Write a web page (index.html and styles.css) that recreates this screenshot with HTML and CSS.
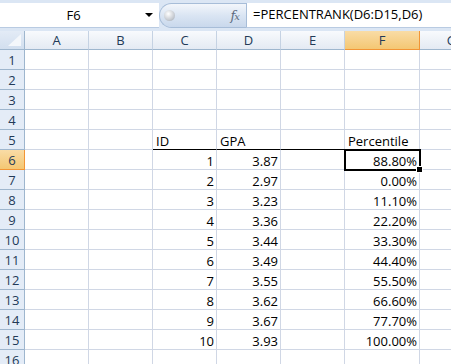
FILE: index.html
```html
<!DOCTYPE html>
<html>
<head>
<meta charset="utf-8">
<title>PERCENTRANK</title>
<link rel="stylesheet" href="styles.css">
</head>
<body>
<div class="formula-bar">
    <div class="name-box"><span class="name">F6</span><span class="arrow"></span></div>
    <div class="fx-button"><span class="knob"></span><span class="fx">f<i>x</i></span></div>
    <div class="formula">=PERCENTRANK(D6:D15,D6)</div>
</div>
<div class="sheet">
    <div class="corner"><svg width="13" height="12" viewBox="0 0 13 12"><polygon points="13,0 13,12 0,12" fill="#f4f7fb"/></svg></div>
    <div class="col-head">A</div><div class="col-head">B</div><div class="col-head">C</div><div class="col-head">D</div><div class="col-head">E</div><div class="col-head sel">F</div><div class="col-head">G</div>

    <div class="row-head">1</div><div class="cell"></div><div class="cell"></div><div class="cell"></div><div class="cell"></div><div class="cell"></div><div class="cell"></div><div class="cell"></div>
    <div class="row-head">2</div><div class="cell"></div><div class="cell"></div><div class="cell"></div><div class="cell"></div><div class="cell"></div><div class="cell"></div><div class="cell"></div>
    <div class="row-head">3</div><div class="cell"></div><div class="cell"></div><div class="cell"></div><div class="cell"></div><div class="cell"></div><div class="cell"></div><div class="cell"></div>
    <div class="row-head">4</div><div class="cell"></div><div class="cell"></div><div class="cell"></div><div class="cell"></div><div class="cell"></div><div class="cell"></div><div class="cell"></div>
    <div class="row-head">5</div><div class="cell"></div><div class="cell"></div><div class="cell ul">ID</div><div class="cell ul">GPA</div><div class="cell ul"></div><div class="cell ul">Percentile</div><div class="cell"></div>
    <div class="row-head sel">6</div><div class="cell"></div><div class="cell"></div><div class="cell num">1</div><div class="cell num">3.87</div><div class="cell"></div><div class="cell num active">88.80%</div><div class="cell"></div>
    <div class="row-head">7</div><div class="cell"></div><div class="cell"></div><div class="cell num">2</div><div class="cell num">2.97</div><div class="cell"></div><div class="cell num">0.00%</div><div class="cell"></div>
    <div class="row-head">8</div><div class="cell"></div><div class="cell"></div><div class="cell num">3</div><div class="cell num">3.23</div><div class="cell"></div><div class="cell num">11.10%</div><div class="cell"></div>
    <div class="row-head">9</div><div class="cell"></div><div class="cell"></div><div class="cell num">4</div><div class="cell num">3.36</div><div class="cell"></div><div class="cell num">22.20%</div><div class="cell"></div>
    <div class="row-head">10</div><div class="cell"></div><div class="cell"></div><div class="cell num">5</div><div class="cell num">3.44</div><div class="cell"></div><div class="cell num">33.30%</div><div class="cell"></div>
    <div class="row-head">11</div><div class="cell"></div><div class="cell"></div><div class="cell num">6</div><div class="cell num">3.49</div><div class="cell"></div><div class="cell num">44.40%</div><div class="cell"></div>
    <div class="row-head">12</div><div class="cell"></div><div class="cell"></div><div class="cell num">7</div><div class="cell num">3.55</div><div class="cell"></div><div class="cell num">55.50%</div><div class="cell"></div>
    <div class="row-head">13</div><div class="cell"></div><div class="cell"></div><div class="cell num">8</div><div class="cell num">3.62</div><div class="cell"></div><div class="cell num">66.60%</div><div class="cell"></div>
    <div class="row-head">14</div><div class="cell"></div><div class="cell"></div><div class="cell num">9</div><div class="cell num">3.67</div><div class="cell"></div><div class="cell num">77.70%</div><div class="cell"></div>
    <div class="row-head">15</div><div class="cell"></div><div class="cell"></div><div class="cell num">10</div><div class="cell num">3.93</div><div class="cell"></div><div class="cell num">100.00%</div><div class="cell"></div>
    <div class="row-head">16</div><div class="cell"></div><div class="cell"></div><div class="cell"></div><div class="cell"></div><div class="cell"></div><div class="cell"></div><div class="cell"></div>
</div>
</body>
</html>
```
FILE: styles.css
```css
body {
    margin: 0;
    font-family: "Open Sans", "Liberation Sans", sans-serif;
    font-size: 13px;
    color: #000;
    background: #fff;
    overflow: hidden;
}

/* formula bar */
.formula-bar {
    display: flex;
    height: 31px;
    padding-top: 3px;
    box-sizing: border-box;
    background: #dbe6f4;
}
.formula-bar > div {
    height: 25px;
    box-sizing: border-box;
}
.name-box {
    display: flex;
    align-items: center;
    width: 159px;
    background: #fff;
    border-bottom: 1px solid #b9cbe2;
}
.name {
    flex: 1;
    text-align: center;
    padding-left: 2px;
}
.arrow {
    width: 0;
    height: 0;
    margin-right: 6px;
    border-left: 4px solid transparent;
    border-right: 4px solid transparent;
    border-top: 4px solid #000;
}
.fx-button {
    display: flex;
    align-items: center;
    justify-content: space-between;
    width: 87px;
    padding: 0 7px 0 4px;
    border: 1px solid #a7bdd8;
    border-right: none;
    border-radius: 13px 0 0 13px;
    background: linear-gradient(#f3f6fb, #dae5f3 50%, #c9d8ec);
}
.knob {
    width: 11px;
    height: 11px;
    border-radius: 50%;
    background: radial-gradient(circle at 40% 35%, #ffffff, #c8ccd2 60%, #9aa3ad);
}
.fx {
    font-family: "DejaVu Serif", "Liberation Serif", serif;
    font-style: italic;
    font-size: 13px;
    color: #5d6b7e;
    letter-spacing: -1px;
}
.fx i {
    font-size: 10px;
}
.formula {
    flex: 1;
    padding: 2px 0 0 6px;
    background: #fff;
    border-left: 1px solid #a7bdd8;
    border-bottom: 1px solid #b9cbe2;
}

/* sheet */
.sheet {
    display: grid;
    grid-template-columns: 25px 64px 64px 64px 64px 64px 75px 64px;
    grid-template-rows: 19px;
    grid-auto-rows: 20px;
}
.sheet > div {
    box-sizing: border-box;
    white-space: nowrap;
}
.corner {
    display: flex;
    align-items: flex-end;
    justify-content: flex-end;
    padding: 0 3px 3px 0;
    background: linear-gradient(#e3ebf6, #d2dfef);
    border-right: 1px solid #9eb6ce;
    border-bottom: 1px solid #9eb6ce;
}
.col-head {
    text-align: center;
    line-height: 18px;
    color: #233a57;
    background: linear-gradient(#f8fafd, #e4eaf3);
    border-right: 1px solid #c5d2e3;
    border-bottom: 1px solid #9eb6ce;
}
.row-head {
    text-align: center;
    line-height: 18px;
    padding-top: 1px;
    color: #233a57;
    background: #e4ecf7;
    border-right: 1px solid #9eb6ce;
    border-bottom: 1px solid #9eb6ce;
}
.col-head.sel,
.row-head.sel {
    background: linear-gradient(#f9dca6, #f4c773);
    border-right-color: #f29536;
    border-bottom-color: #f29536;
}
.cell {
    padding: 2px 2px 0 3px;
    line-height: 18px;
    border-right: 1px solid #d0d7e5;
    border-bottom: 1px solid #d0d7e5;
}
.cell.num {
    text-align: right;
}
.cell.ul {
    border-bottom-color: #000;
}
.cell.active {
    position: relative;
    z-index: 1;
    outline: 2px solid #000;
    outline-offset: -1px;
}
.cell.active::after {
    content: "";
    position: absolute;
    right: -4px;
    bottom: -4px;
    width: 5px;
    height: 5px;
    background: #000;
    border: 1px solid #fff;
}
```
